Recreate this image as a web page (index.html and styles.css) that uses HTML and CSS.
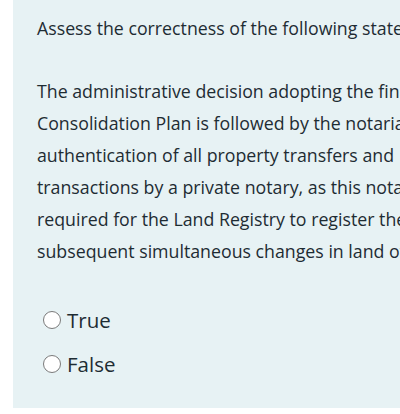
FILE: index.html
```html
<!DOCTYPE html>
<html lang="en">
<head>
<meta charset="UTF-8">
<meta name="viewport" content="width=device-width, initial-scale=1.0">
<title>Question</title>
<link rel="stylesheet" href="styles.css">
</head>
<body>
<div class="page">
  <div class="question">
    <p class="prompt">Assess the correctness of the following statement:</p>
    <p class="statement">The administrative decision adopting the final<br>
      Consolidation Plan is followed by the notarial<br>
      authentication of all property transfers and<br>
      transactions by a private notary, as this notary is<br>
      required for the Land Registry to register the<br>
      subsequent simultaneous changes in land ownership.</p>
    <div class="answers">
      <label class="answer"><input type="radio" name="answer" value="true"> True</label>
      <label class="answer"><input type="radio" name="answer" value="false"> False</label>
    </div>
  </div>
</div>
</body>
</html>
```

FILE: styles.css
```css
html, body {
  margin: 0;
  overflow: hidden;
}

body {
  font-family: "Open Sans", sans-serif;
  color: #1e2c33;
  background: #fff;
}

.page {
  padding-left: 13px;
  width: 600px;
}

.question {
  background-color: #e7f2f4;
  width: 540px;
  height: 408px;
  box-sizing: border-box;
  padding: 12px 24px 0 24px;
  font-size: 17.75px;
  line-height: 32px;
}

.prompt {
  margin: 0 0 31px 0;
  white-space: nowrap;
}

.statement {
  margin: 0;
  white-space: nowrap;
}

.answers {
  display: flex;
  flex-direction: column;
  gap: 12px;
  margin-top: 37px;
}

.answer {
  display: flex;
  align-items: center;
  gap: 6px;
  height: 32px;
  font-size: 20.5px;
}

.answer input {
  appearance: none;
  width: 18px;
  height: 18px;
  margin: 0 0 0 6px;
  border: 1px solid #7a7a7a;
  border-radius: 50%;
  background: #fff;
}
```
